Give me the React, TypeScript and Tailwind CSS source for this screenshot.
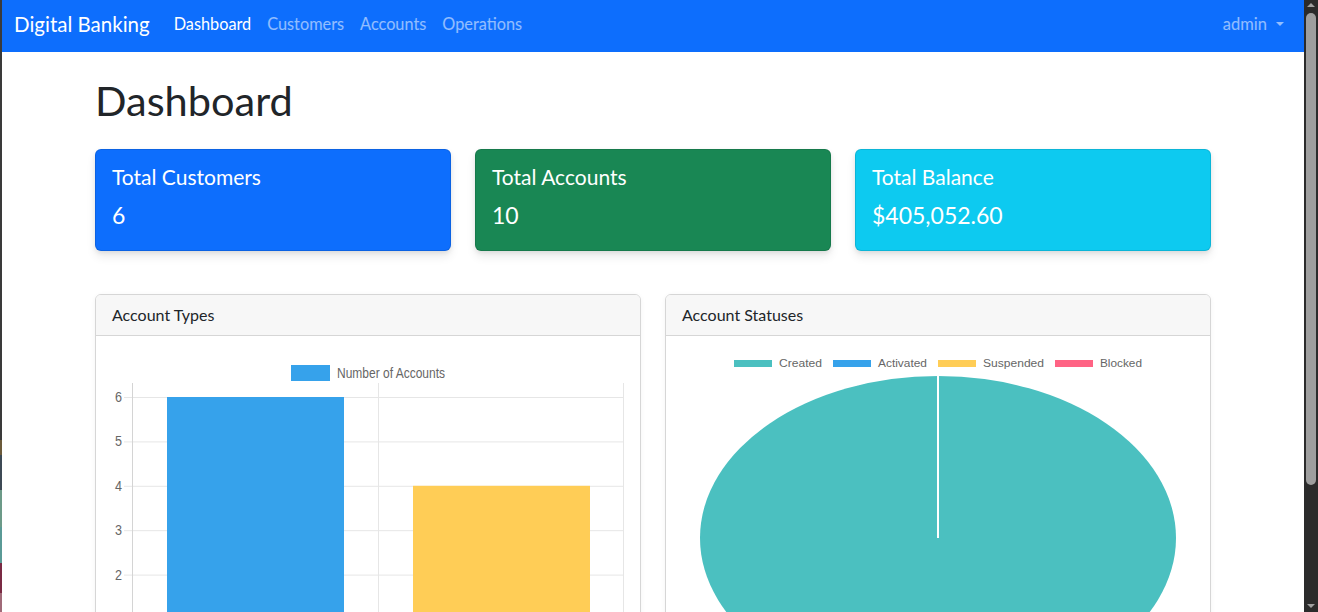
import React from "react";

const FONT = { fontFamily: "Lato, 'Noto Sans', sans-serif" };

function BarChart() {
  const yFor = (v: number) => 44 + (6 - v) * 44.4;
  return (
    <svg width="512" height="270" viewBox="0 0 512 270" className="block">
      {/* legend */}
      <rect x="179" y="12" width="39" height="16" fill="#36a2eb" />
      <text x="225" y="25" fontSize="15" fill="#666" fontFamily="'Liberation Sans', Arial, sans-serif" textLength="108" lengthAdjust="spacingAndGlyphs">Number of Accounts</text>
      {/* horizontal grid */}
      {[6, 5, 4, 3, 2, 1].map((v) => (
        <g key={v}>
          <line x1="12" x2="512" y1={yFor(v) + 0.5} y2={yFor(v) + 0.5} stroke="#e6e6e6" strokeWidth="1" />
          <text x="10" y={yFor(v) + 5} fontSize="15" fill="#666" textAnchor="end" fontFamily="'Liberation Sans', Arial, sans-serif" textLength="7" lengthAdjust="spacingAndGlyphs">{v}</text>
        </g>
      ))}
      {/* vertical grid */}
      <line x1="20.5" x2="20.5" y1="30" y2="270" stroke="#d4d4d4" />
      <line x1="266.5" x2="266.5" y1="30" y2="270" stroke="#e6e6e6" />
      <line x1="511.5" x2="511.5" y1="30" y2="270" stroke="#e6e6e6" />
      {/* bars */}
      <rect x="55" y={yFor(6)} width="177" height={270 - yFor(6)} fill="#36a2eb" />
      <rect x="301" y={yFor(4)} width="177" height={270 - yFor(4)} fill="#ffcd56" />
    </svg>
  );
}

function PieChart() {
  const items = [
    { label: "Created", color: "#4bc0c0", bx: 52, tx: 97, tl: 43 },
    { label: "Activated", color: "#36a2eb", bx: 151, tx: 196, tl: 49 },
    { label: "Suspended", color: "#ffcd56", bx: 256, tx: 301, tl: 61 },
    { label: "Blocked", color: "#ff6384", bx: 373, tx: 418, tl: 42 },
  ];
  return (
    <svg width="512" height="270" viewBox="0 0 512 270" className="block">
      {items.map((it) => (
        <g key={it.label}>
          <rect x={it.bx} y="7" width="38" height="7" fill={it.color} />
          <text x={it.tx} y="14" fontSize="10" fill="#666" fontFamily="'Liberation Sans', Arial, sans-serif" textLength={it.tl} lengthAdjust="spacingAndGlyphs">{it.label}</text>
        </g>
      ))}
      <ellipse cx="256" cy="185" rx="238" ry="162" fill="#4bc0c0" />
      <line x1="256" x2="256" y1="23" y2="185" stroke="#fff" strokeWidth="2" />
    </svg>
  );
}

function StatCard({ title, value, bg }: { title: string; value: string; bg: string }) {
  return (
    <div className={`flex-1 rounded-md border border-black/10 shadow-[0_0.125rem_0.25rem_rgba(0,0,0,0.075),0_0.35rem_0.6rem_rgba(0,0,0,0.08)] text-white p-4 ${bg}`}>
      <div className="text-[21px] leading-6 mb-2 -mt-px">{title}</div>
      <div className="text-[23px] leading-[36px] mb-px">{value}</div>
    </div>
  );
}

function ChartCard({ title, children }: { title: string; children: React.ReactNode }) {
  return (
    <div className="flex-1 rounded-md border border-[#d6d6d6] bg-white shadow-[0_0.1rem_0.3rem_rgba(0,0,0,0.05)] overflow-hidden">
      <div className="bg-[#f7f7f7] border-b border-[#d6d6d6] px-4 py-2 text-[16px] leading-6 text-[#212529]">{title}</div>
      <div className="pt-[17px] px-4">{children}</div>
    </div>
  );
}

export default function App() {
  return (
    <div className="flex h-[612px] w-[1318px] overflow-hidden bg-white" style={FONT}>
      {/* left desktop strip */}
      <div className="flex w-[2px] flex-col shrink-0">
        <div className="h-[440px] bg-[#3a3a3a]" />
        <div className="h-[15px] bg-[#6b5a3a]" />
        <div className="h-[35px] bg-[#3d4a55]" />
        <div className="h-[37px] bg-[#6c9a88]" />
        <div className="h-[36px] bg-[#5a9a96]" />
        <div className="h-[30px] bg-[#7a2a44]" />
        <div className="flex-1 bg-[#a06a78]" />
      </div>

      {/* page */}
      <div className="flex-1 min-w-0 flex flex-col">
        <nav className="h-[52px] bg-[#0d6efd] flex items-center px-3 pb-1 shrink-0">
          <span className="text-white text-[20.5px] mr-4 leading-[30px]">Digital Banking</span>
          <div className="flex items-center text-[16.3px]">
            <span className="px-2 text-white">Dashboard</span>
            <span className="px-2 text-white/55">Customers</span>
            <span className="px-2 text-white/55">Accounts</span>
            <span className="px-2 text-white/55">Operations</span>
          </div>
          <div className="ml-auto flex items-center px-2 text-[16.5px] text-white/55">
            <span>admin</span>
            <span className="ml-[9px] inline-block w-0 h-0 border-l-[4px] border-r-[4px] border-t-[4px] border-l-transparent border-r-transparent border-t-white/55" />
          </div>
        </nav>

        <div className="w-[1116px] mx-auto">
          <h1 className="mt-6 mb-[25px] text-[41.5px] leading-[48px] text-[#212529]">Dashboard</h1>
          <div className="flex gap-6">
            <StatCard title="Total Customers" value="6" bg="bg-[#0d6efd]" />
            <StatCard title="Total Accounts" value="10" bg="bg-[#198754]" />
            <StatCard title="Total Balance" value="$405,052.60" bg="bg-[#0dcaf0]" />
          </div>
          <div className="flex gap-6 mt-[43px]">
            <ChartCard title="Account Types">
              <BarChart />
            </ChartCard>
            <ChartCard title="Account Statuses">
              <PieChart />
            </ChartCard>
          </div>
        </div>
      </div>

      {/* scrollbar */}
      <div className="w-[14px] shrink-0 bg-[#2b2b2b] flex flex-col items-center">
        <div className="mt-[3px] w-0 h-0 border-l-[4px] border-r-[4px] border-b-[4px] border-l-transparent border-r-transparent border-b-[#a0a0a0]" />
        <div className="mt-[6px] w-[10px] h-[472px] rounded-full bg-[#9e9e9e]" />
        <div className="mt-auto mb-[4px] w-0 h-0 border-l-[4px] border-r-[4px] border-t-[4px] border-l-transparent border-r-transparent border-t-[#a0a0a0]" />
      </div>
    </div>
  );
}
